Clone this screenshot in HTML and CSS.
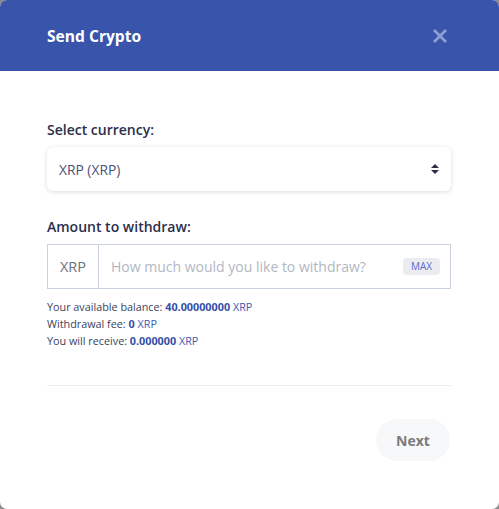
FILE: index.html
```html
<!DOCTYPE html>
<html>
<head>
<meta charset="utf-8">
<link rel="stylesheet" href="styles.css">
</head>
<body>
<div class="modal">
  <div class="header">
    <div class="title">Send Crypto</div>
    <div class="close">
      <svg width="16" height="16" viewBox="0 0 16 16"><path d="M2 2L14 14M14 2L2 14" stroke="#8f9fd4" stroke-width="2.6" stroke-linecap="butt"/></svg>
    </div>
  </div>
  <div class="body">
    <div class="label">Select currency:</div>
    <div class="select">
      <span>XRP (XRP)</span>
      <svg width="8" height="12" viewBox="0 0 8 12"><path d="M4 1L8 5H0Z M4 11L8 7H0Z" fill="#2a2e4a"/></svg>
    </div>
    <div class="label second">Amount to withdraw:</div>
    <div class="group">
      <div class="addon">XRP</div>
      <div class="input">
        <span class="ph">How much would you like to withdraw?</span>
        <span class="max">MAX</span>
      </div>
    </div>
    <div class="info">
      <div>Your available balance: <b>40.00000000</b> <span class="c">XRP</span></div>
      <div>Withdrawal fee: <b>0</b> <span class="c">XRP</span></div>
      <div>You will receive: <b>0.000000</b> <span class="c">XRP</span></div>
    </div>
    <div class="divider"></div>
    <div class="footer">
      <div class="next">Next</div>
    </div>
  </div>
</div>
</body>
</html>
```
FILE: styles.css
```css
html, body {
  margin: 0;
  padding: 0;
  background: #8a8a8a;
}
body {
  font-family: "Open Sans", "Noto Sans", sans-serif;
}
.modal {
  width: 499px;
  height: 509px;
  background: #fff;
  border-radius: 7px;
  overflow: hidden;
}
.header {
  height: 71px;
  background: #3955ab;
  display: flex;
  align-items: center;
  justify-content: space-between;
  padding: 0 51px 0 47px;
}
.title {
  color: #fff;
  font-weight: 700;
  font-size: 15.6px;
  margin-top: 1px;
}
.close {
  display: flex;
  margin-top: 1px;
}
.body {
  padding: 49px 48px 0 47px;
}
.label {
  color: #2b2f4c;
  font-weight: 600;
  font-size: 14px;
  line-height: 20px;
}
.label.second {
  margin-top: 26px;
}
.select {
  margin-top: 7px;
  height: 44px;
  border-radius: 6px;
  box-shadow: 0 1px 4px rgba(30, 40, 80, 0.16);
  display: flex;
  align-items: center;
  justify-content: space-between;
  padding: 0 12px 0 12px;
  color: #4b5178;
  font-size: 13.8px;
}
.group {
  margin-top: 7px;
  height: 43px;
  border: 1px solid #c9d1dc;
  display: flex;
}
.addon {
  width: 50px;
  border-right: 1px solid #c9d1dc;
  display: flex;
  align-items: center;
  justify-content: center;
  color: #6b7180;
  font-size: 14.5px;
}
.input {
  flex: 1;
  display: flex;
  align-items: center;
  justify-content: space-between;
  padding: 0 10px 0 12px;
}
.ph {
  color: #b1b8c3;
  font-size: 14px;
}
.max {
  background: #eaecf0;
  color: #5a6acd;
  font-size: 10px;
  border-radius: 4px;
  padding: 2px 8px;
  line-height: 13px;
}
.info {
  margin-top: 9px;
  font-size: 10.8px;
  line-height: 17px;
  color: #3b3f5a;
}
.info b {
  color: #3550a8;
  font-weight: 700;
}
.info .c {
  color: #3f5ab0;
}
.divider {
  margin-top: 36px;
  height: 1px;
  background: #ececec;
}
.footer {
  display: flex;
  justify-content: flex-end;
  padding-top: 33px;
  padding-right: 1px;
}
.next {
  width: 74px;
  height: 42px;
  border-radius: 21px;
  background: #f7f8fa;
  color: #7a7a7a;
  font-weight: 700;
  font-size: 14px;
  display: flex;
  align-items: center;
  justify-content: center;
}
```
